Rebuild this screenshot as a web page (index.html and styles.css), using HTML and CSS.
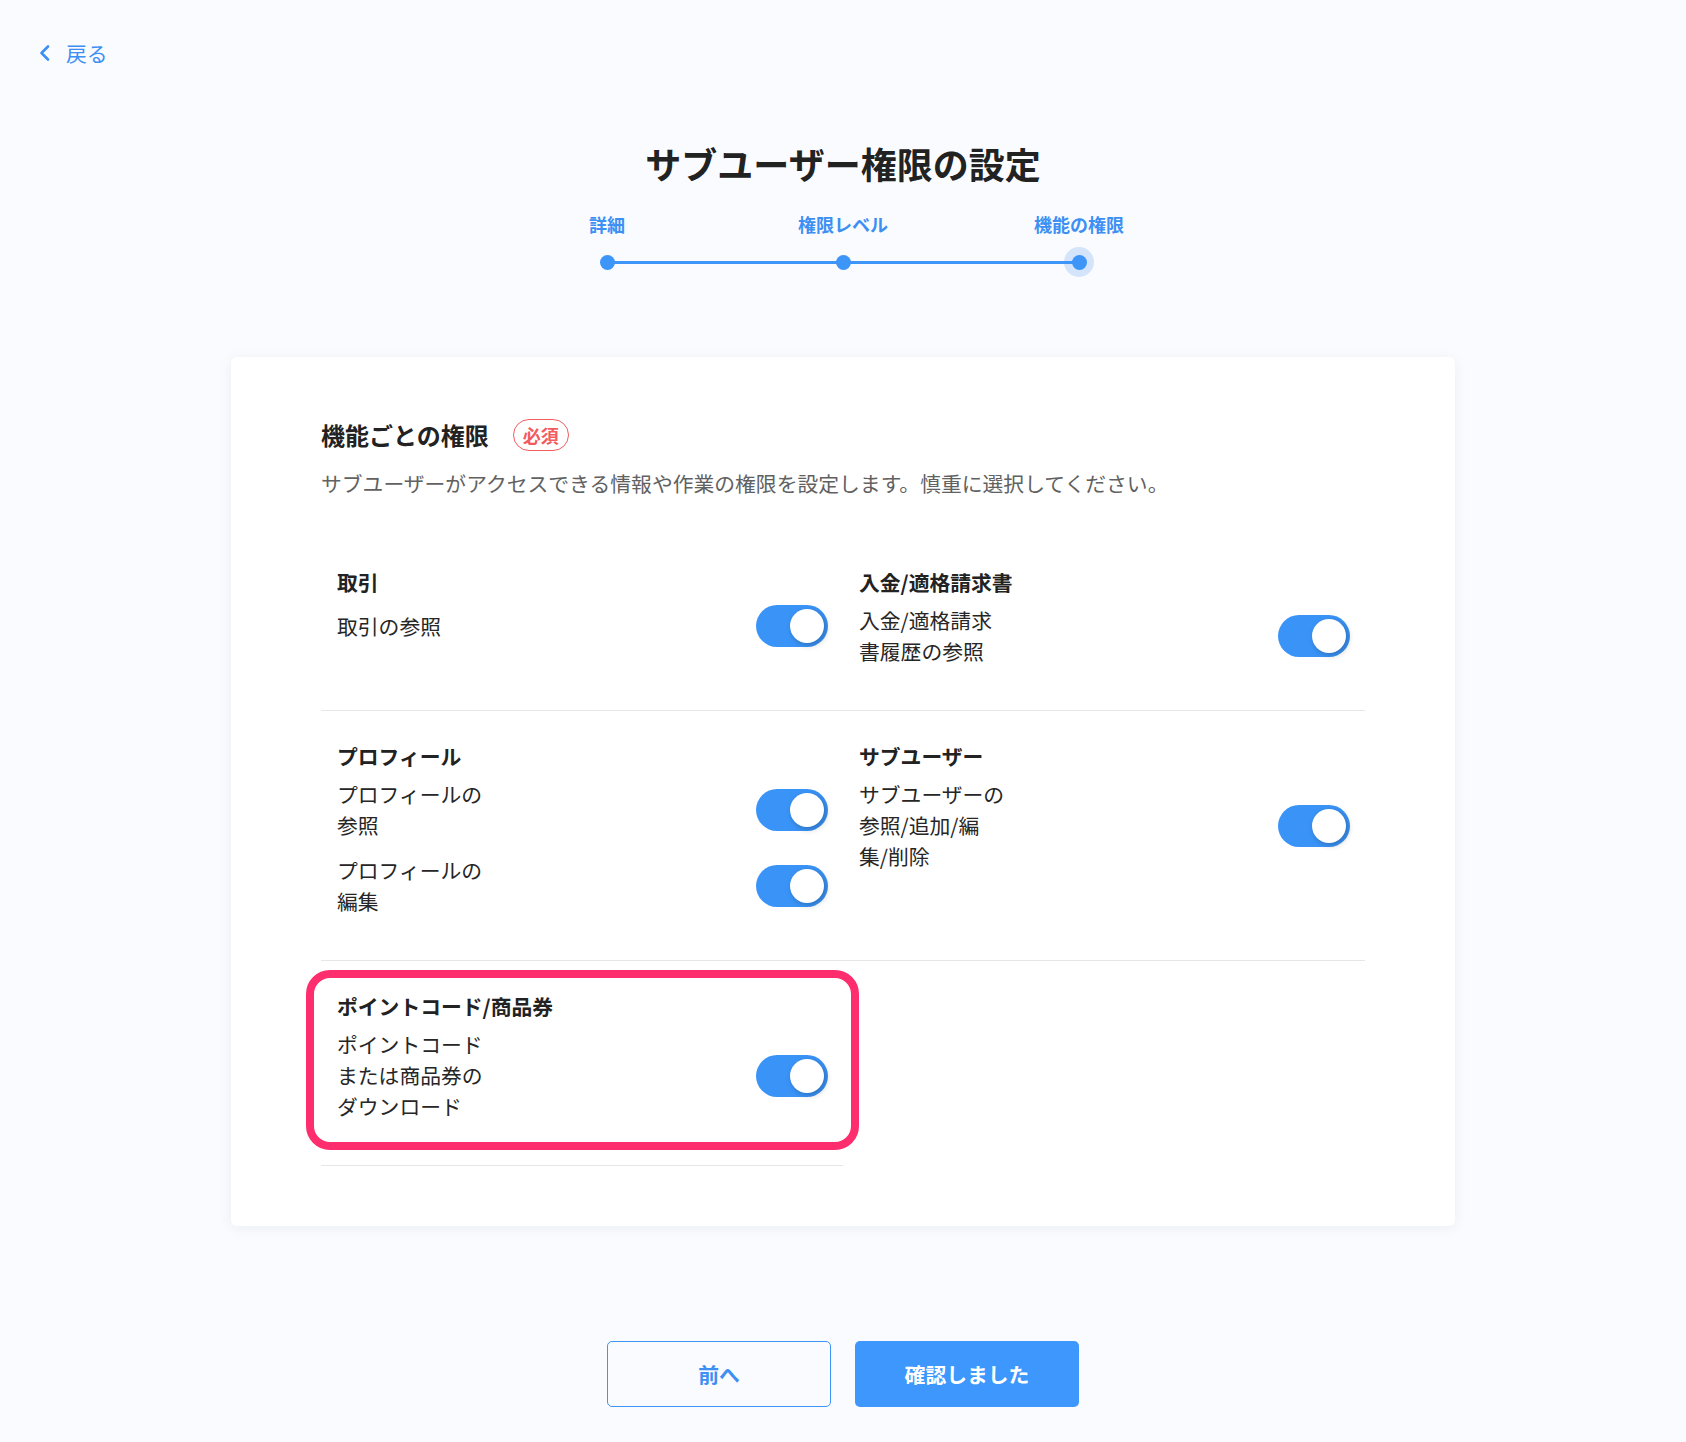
FILE: index.html
```html
<!doctype html>
<html lang="ja">
  <head>
    <meta charset="UTF-8" />
    <meta name="viewport" content="width=device-width, initial-scale=1.0" />
    <title>サブユーザー権限の設定</title>
    <link rel="stylesheet" href="styles.css">
  </head>
  <body>
    <div class="page">
      <a class="back" href="#">
        <svg width="13" height="18" viewBox="0 0 13 18" aria-hidden="true">
          <path d="M10 2.5 L3.5 9 L10 15.5" fill="none" stroke="currentColor" stroke-width="2.6" stroke-linecap="round" stroke-linejoin="round" />
        </svg>
        <span>戻る</span>
      </a>

      <h1 class="title">サブユーザー権限の設定</h1>

      <div class="steps">
        <div class="step">
          <span class="step-label">詳細</span>
          <span class="step-dot"></span>
        </div>
        <div class="step">
          <span class="step-label">権限レベル</span>
          <span class="step-dot"></span>
        </div>
        <div class="step">
          <span class="step-label">機能の権限</span>
          <span class="step-dot active"></span>
        </div>
      </div>

      <div class="card">
        <div class="card-head">
          <h2>機能ごとの権限</h2>
          <span class="badge">必須</span>
        </div>
        <p class="desc">サブユーザーがアクセスできる情報や作業の権限を設定します。慎重に選択してください。</p>

        <div class="grid">
          <div class="cell">
            <h3>取引</h3>
            <div class="items">
              <div class="item">
                <span>取引の参照</span>
                <button class="toggle" aria-pressed="true"></button>
              </div>
            </div>
          </div>

          <div class="cell">
            <h3>入金/適格請求書</h3>
            <div class="items">
              <div class="item">
                <span>入金/適格請求<br>書履歴の参照</span>
                <button class="toggle" aria-pressed="true"></button>
              </div>
            </div>
          </div>

          <div class="cell">
            <h3>プロフィール</h3>
            <div class="items">
              <div class="item">
                <span>プロフィールの<br>参照</span>
                <button class="toggle" aria-pressed="true"></button>
              </div>
              <div class="item">
                <span>プロフィールの<br>編集</span>
                <button class="toggle" aria-pressed="true"></button>
              </div>
            </div>
          </div>

          <div class="cell">
            <h3>サブユーザー</h3>
            <div class="items">
              <div class="item">
                <span>サブユーザーの<br>参照/追加/編<br>集/削除</span>
                <button class="toggle" aria-pressed="true"></button>
              </div>
            </div>
          </div>

          <div class="cell">
            <div class="highlight"></div>
            <h3>ポイントコード/商品券</h3>
            <div class="items">
              <div class="item">
                <span>ポイントコード<br>または商品券の<br>ダウンロード</span>
                <button class="toggle" aria-pressed="true"></button>
              </div>
            </div>
          </div>
        </div>
      </div>

      <div class="actions">
        <button class="btn btn-outline">前へ</button>
        <button class="btn btn-primary">確認しました</button>
      </div>
    </div>
  </body>
</html>
```

FILE: styles.css
```css
/* Base */
body {
  margin: 0;
  background-color: #f9fbfe;
  color: #222;
  font-family: "Noto Sans CJK JP", "Noto Sans", sans-serif;
}

.page {
  padding: 37px 0 35px;
}

/* Back link */
.back {
  display: flex;
  align-items: center;
  gap: 15px;
  width: fit-content;
  margin-left: 38px;
  color: #3d8ff3;
  font-size: 20.8px;
  line-height: 32px;
  text-decoration: none;
}

/* Title */
.title {
  margin: 67px 0 0;
  font-size: 36px;
  line-height: 54px;
  font-weight: 700;
  text-align: center;
  color: #222;
}

/* Stepper */
.steps {
  position: relative;
  display: flex;
  width: 708px;
  margin: 21px auto 0;
}

.steps::before {
  content: "";
  position: absolute;
  left: 118px;
  right: 118px;
  top: 50px;
  height: 3px;
  background-color: #3d95f8;
}

.step {
  flex: 1;
  display: flex;
  flex-direction: column;
  align-items: center;
  gap: 9px;
}

.step-label {
  font-size: 18px;
  line-height: 27px;
  font-weight: 700;
  color: #3d8ff3;
}

.step-dot {
  display: flex;
  align-items: center;
  justify-content: center;
  width: 30px;
  height: 30px;
  border-radius: 50%;
}

.step-dot::after {
  content: "";
  position: relative;
  width: 15px;
  height: 15px;
  border-radius: 50%;
  background-color: #3d95f8;
}

.step-dot.active {
  background-color: #d4e5fb;
}

/* Card */
.card {
  box-sizing: border-box;
  width: 1224px;
  margin: 80px auto 0;
  padding: 60px 90px;
  background-color: #fff;
  border-radius: 6px;
  box-shadow: 0 2px 14px rgba(20, 40, 90, 0.06);
}

.card-head {
  display: flex;
  align-items: center;
  gap: 24px;
}

.card-head h2 {
  margin: 0;
  font-size: 24px;
  line-height: 36px;
  font-weight: 700;
}

.badge {
  box-sizing: border-box;
  height: 32px;
  padding: 0 9px;
  border: 1px solid #f25c61;
  border-radius: 16px;
  color: #f25c61;
  font-size: 18px;
  line-height: 30px;
  font-weight: 700;
}

.desc {
  margin: 15px 0 38px;
  font-size: 20.8px;
  line-height: 31px;
  color: #616161;
}

/* Permission grid */
.grid {
  display: grid;
  grid-template-columns: 1fr 1fr;
}

.cell {
  position: relative;
  padding: 30px 15px 43px 16px;
  border-bottom: 1px solid #e6e6e6;
}

.cell h3 {
  position: relative;
  margin: 0 0 7px;
  font-size: 20.8px;
  line-height: 31px;
  font-weight: 700;
}

.items {
  display: flex;
  flex-direction: column;
  gap: 14px;
}

.item {
  display: flex;
  justify-content: space-between;
  align-items: center;
  font-size: 20.8px;
  line-height: 31px;
  color: #262626;
}

.toggle {
  position: relative;
  flex-shrink: 0;
  width: 72px;
  height: 42px;
  padding: 0;
  border: 0;
  border-radius: 21px;
  background-color: #3a94f8;
}

.toggle::after {
  content: "";
  position: absolute;
  top: 4px;
  right: 4px;
  width: 34px;
  height: 34px;
  border-radius: 50%;
  background-color: #fff;
  box-shadow: 2px 2px 6px rgba(0, 0, 0, 0.25);
}

/* Annotation frame over the point code row */
.highlight {
  position: absolute;
  top: 9px;
  left: -15px;
  right: -16px;
  bottom: 15px;
  border: 8px solid #fe2d6d;
  border-radius: 24px;
  pointer-events: none;
}

/* Footer buttons */
.actions {
  display: flex;
  justify-content: center;
  gap: 24px;
  margin-top: 115px;
}

.btn {
  box-sizing: border-box;
  width: 224px;
  height: 66px;
  border-radius: 5px;
  font-family: inherit;
  font-size: 20.8px;
  font-weight: 700;
  cursor: pointer;
}

.btn-outline {
  background-color: transparent;
  border: 1.5px solid #3d95f8;
  color: #3d8ff3;
}

.btn-primary {
  background-color: #3d97fc;
  border: 0;
  color: #fff;
}
```
